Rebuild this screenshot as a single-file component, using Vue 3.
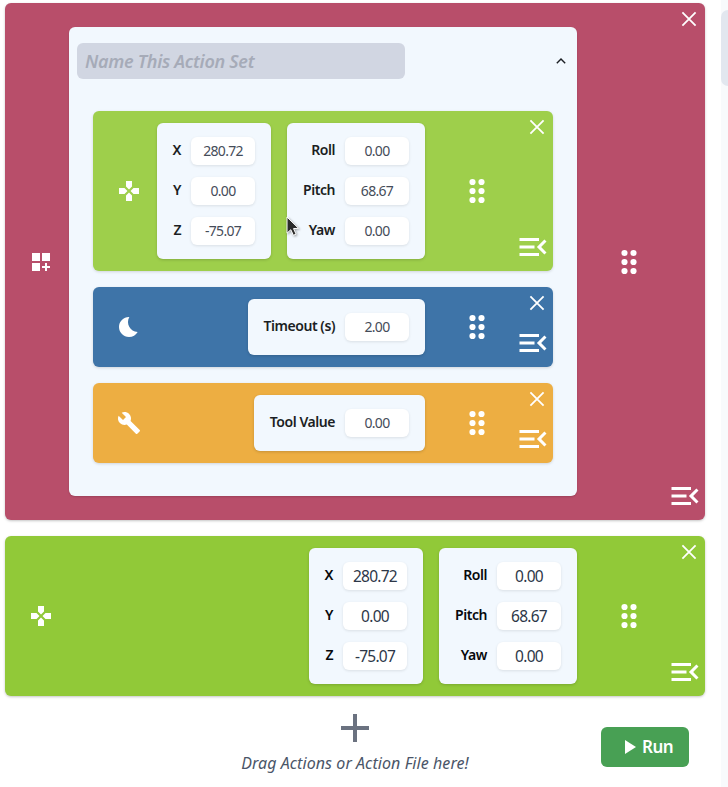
<script setup>
const pose = [
  [['X', '280.72'], ['Y', '0.00'], ['Z', '-75.07']],
  [['Roll', '0.00'], ['Pitch', '68.67'], ['Yaw', '0.00']],
]
const icons = {
  move: 'M15 7.5V2H9v5.5l3 3 3-3zM7.5 9H2v6h5.5l3-3-3-3zM9 16.5V22h6v-5.5l-3-3-3 3zM16.5 9l-3 3 3 3H22V9h-5.5z',
  sleep: 'M12.34 2.02C6.59 1.82 2 6.42 2 12c0 5.52 4.48 10 10 10 3.71 0 6.93-2.02 8.66-5.02-7.51-.25-12.09-8.43-8.32-14.96z',
  tool: 'M22.7 19l-9.1-9.1c.9-2.3.4-5-1.5-6.9-2-2-5-2.4-7.4-1.3L9 6 6 9 1.6 4.7C.4 7.1.9 10.1 2.9 12.1c1.9 1.9 4.6 2.4 6.9 1.5l9.1 9.1c.4.4 1 .4 1.4 0l2.3-2.3c.5-.4.5-1.1.1-1.4z',
  menu: 'M3 18h13v-2H3v2zm0-5h10v-2H3v2zm0-7v2h13V6H3zm18 9.59L17.42 12 21 8.41 19.59 7l-5 5 5 5L21 15.59z',
}
const nested = [
  { kind: 'move', groups: pose, sizes: ['xyz', 'rpy'] },
  { kind: 'sleep', groups: [[['Timeout (s)', '2.00']]], sizes: ['timeout'] },
  { kind: 'tool', groups: [[['Tool Value', '0.00']]], sizes: ['toolval'] },
]
</script>

<template>
  <div class="page">
    <main class="list">
      <section class="card set">
        <div class="kind">
          <svg class="i24" viewBox="0 0 24 24"><path d="M3 3h8v8H3zM13 3h8v8h-8zM3 13h8v8H3zM18 13h-2v3h-3v2h3v3h2v-3h3v-2h-3z" /></svg>
        </div>
        <div class="panel">
          <div class="head">
            <div class="name"><span>Name This Action Set</span></div>
            <svg class="chev" viewBox="0 0 16 16"><path d="M3.8 10.2 8 6l4.2 4.2" /></svg>
          </div>
          <div class="inner">
            <article v-for="a in nested" :key="a.kind" class="card small" :class="a.kind">
              <div class="kind"><svg class="i24" viewBox="0 0 24 24"><path :d="icons[a.kind]" /></svg></div>
              <div class="groups">
                <div v-for="(g, i) in a.groups" :key="i" class="box" :class="a.sizes[i]">
                  <div v-for="f in g" :key="f[0]" class="field"><label>{{ f[0] }}</label><div class="val"><span>{{ f[1] }}</span></div></div>
                </div>
              </div>
              <div class="grip"><svg viewBox="0 0 16 24"><circle v-for="n in 6" :key="n" :cx="n % 2 ? 3.5 : 12.5" :cy="3 + Math.floor((n - 1) / 2) * 9" r="3.1" /></svg></div>
              <div class="tools">
                <svg class="close" viewBox="0 0 16 16"><path d="M1.4 1.4l13.2 13.2M14.6 1.4L1.4 14.6" /></svg>
                <svg class="menu" viewBox="0 0 24 24"><path :d="icons.menu" /></svg>
              </div>
            </article>
          </div>
        </div>
        <div class="grip"><svg viewBox="0 0 16 24"><circle v-for="n in 6" :key="n" :cx="n % 2 ? 3.5 : 12.5" :cy="3 + Math.floor((n - 1) / 2) * 9" r="3.1" /></svg></div>
        <div class="tools">
          <svg class="close" viewBox="0 0 16 16"><path d="M1.4 1.4l13.2 13.2M14.6 1.4L1.4 14.6" /></svg>
          <svg class="menu" viewBox="0 0 24 24"><path :d="icons.menu" /></svg>
        </div>
      </section>

      <section class="card large">
        <div class="kind"><svg class="i24" viewBox="0 0 24 24"><path :d="icons.move" /></svg></div>
        <div class="groups">
          <div v-for="(g, i) in pose" :key="i" class="box" :class="i ? 'rpy' : 'xyz'">
            <div v-for="f in g" :key="f[0]" class="field"><label>{{ f[0] }}</label><div class="val"><span>{{ f[1] }}</span></div></div>
          </div>
        </div>
        <div class="grip"><svg viewBox="0 0 16 24"><circle v-for="n in 6" :key="n" :cx="n % 2 ? 3.5 : 12.5" :cy="3 + Math.floor((n - 1) / 2) * 9" r="3.1" /></svg></div>
        <div class="tools">
          <svg class="close" viewBox="0 0 16 16"><path d="M1.4 1.4l13.2 13.2M14.6 1.4L1.4 14.6" /></svg>
          <svg class="menu" viewBox="0 0 24 24"><path :d="icons.menu" /></svg>
        </div>
      </section>

      <footer class="foot">
        <div class="drop">
          <svg class="plus" viewBox="0 0 28 28"><path d="M12 0h4v12h12v4H16v12h-4V16H0v-4h12z" /></svg>
          <span>Drag Actions or Action File here!</span>
        </div>
        <button class="run"><svg viewBox="0 0 11 14"><path d="M0 0v14l11-7z" /></svg><span>Run</span></button>
      </footer>
    </main>
    <aside class="side"><div class="thumb"></div></aside>
    <svg class="cursor" viewBox="0 0 14 22"><path d="M1 1v16.2l3.8-3.5 2.6 5.6 2.7-1.2-2.6-5.5 5-.3z" /></svg>
  </div>
</template>

<style>
body { background: #fff; overflow: hidden; }
</style>

<style scoped>
* { box-sizing: border-box; }
.page { position: relative; display: flex; width: 728px; height: 787px; font-family: "Noto Sans", "Open Sans", sans-serif; overflow: hidden; }
svg { display: block; fill: #fff; flex: none; }
.list { display: flex; flex-direction: column; gap: 16px; width: 721px; padding: 3px 16px 0 5px; flex: none; }
.card { display: flex; border-radius: 6px; box-shadow: 0 1px 3px rgba(0, 0, 0, .18), 0 1px 2px rgba(0, 0, 0, .06); }
.set { height: 517px; background: #b84e6a; }
.large { height: 160px; background: #91c938; }
.small { height: 80px; box-shadow: 0 1px 3px rgba(0, 0, 0, .14); }
.move { height: 160px; background: #9ecf4b; }
.sleep { background: #3e74a8; }
.tool { background: #edae42; }
.kind { display: flex; align-items: center; width: 64px; padding-left: 24px; flex: none; }
.set > .kind, .set > .grip { padding-top: 1px; }
.i24 { width: 24px; height: 24px; }
.panel { width: 508px; height: 469px; margin: 24px 0; padding: 16px 8px; border-radius: 6px; background: #f2f8fe; box-shadow: 0 1px 2px rgba(0, 0, 0, .15); flex: none; }
.head { display: flex; align-items: center; justify-content: space-between; }
.name { display: flex; align-items: center; width: 328px; height: 36px; padding: 0 0 1px 8px; border-radius: 6px; background: #d1d6e2; color: #a6abb8; font-size: 18px; font-style: italic; font-weight: 600; letter-spacing: -.3px; white-space: nowrap; }
.chev { width: 16px; height: 16px; fill: none; stroke: #1c1f24; stroke-width: 1.4; }
.inner { display: flex; flex-direction: column; gap: 16px; padding: 32px 16px 0; }
.groups { display: flex; flex: 1; justify-content: flex-end; align-items: center; gap: 16px; }
.box { display: flex; flex-direction: column; gap: 12px; padding: 14px 16px; border-radius: 6px; background: #f2f8fe; box-shadow: 0 1px 3px rgba(0, 0, 0, .17); }
.xyz { width: 114px; }
.rpy { width: 138px; }
.timeout { width: 177px; }
.toolval { width: 171px; }
.field { display: flex; align-items: center; gap: 10px; height: 28px; }
label { display: flex; flex: 1; justify-content: flex-end; padding-bottom: 2px; min-width: 0; color: #1b1e23; font-size: 14px; line-height: 20px; font-weight: 600; letter-spacing: -.45px; white-space: nowrap; }
.large label { color: #07090c; }
.val { display: flex; align-items: center; justify-content: center; width: 64px; height: 28px; padding-bottom: 2px; border-radius: 6px; background: #fff; color: #454c59; font-size: 14px; letter-spacing: -.7px; box-shadow: 0 1px 3px rgba(0, 0, 0, .1); flex: none; }
.large .val { padding-bottom: 0; color: #2d3748; font-size: 15.5px; letter-spacing: -.75px; }
.grip { display: flex; align-items: center; justify-content: center; width: 104px; flex: none; }
.grip svg { width: 16px; height: 24px; overflow: visible; }
.tools { display: flex; flex-direction: column; align-items: flex-end; justify-content: space-between; width: 24px; padding: 8px 2px 6px 0; flex: none; }
.close { width: 16px; height: 16px; margin-right: 6px; fill: none; stroke: #fff; stroke-width: 1.8; }
.menu { width: 36px; height: 36px; }
.foot { display: flex; justify-content: space-between; padding-right: 16px; }
.drop { display: flex; flex-direction: column; align-items: center; width: 250px; margin-left: 225px; padding-top: 2px; color: #4a5568; font-size: 16px; font-style: italic; letter-spacing: .07px; line-height: 24px; white-space: nowrap; }
.plus { width: 28px; height: 28px; margin-bottom: 9px; fill: #6b7280; }
.run { display: flex; align-items: center; width: 88px; height: 40px; margin-top: 15px; padding: 0 0 0 24px; gap: 6px; border: 0; border-radius: 6px; background: #48a054; color: #fff; font: 600 17px "Noto Sans", sans-serif; letter-spacing: -.5px; }
.run span { padding-bottom: 2px; }
.run svg { width: 11px; height: 14px; }
.side { width: 7px; height: 787px; padding-top: 10px; background: #f8fafc; flex: none; }
.thumb { width: 14px; height: 76px; border-radius: 7px; background: #e2e7ef; }
.cursor { position: absolute; left: 286px; top: 216px; width: 14px; height: 22px; fill: #2b2b2b; stroke: #fff; stroke-width: 1; filter: drop-shadow(1px 1px 1px rgba(0, 0, 0, .35)); }
</style>
